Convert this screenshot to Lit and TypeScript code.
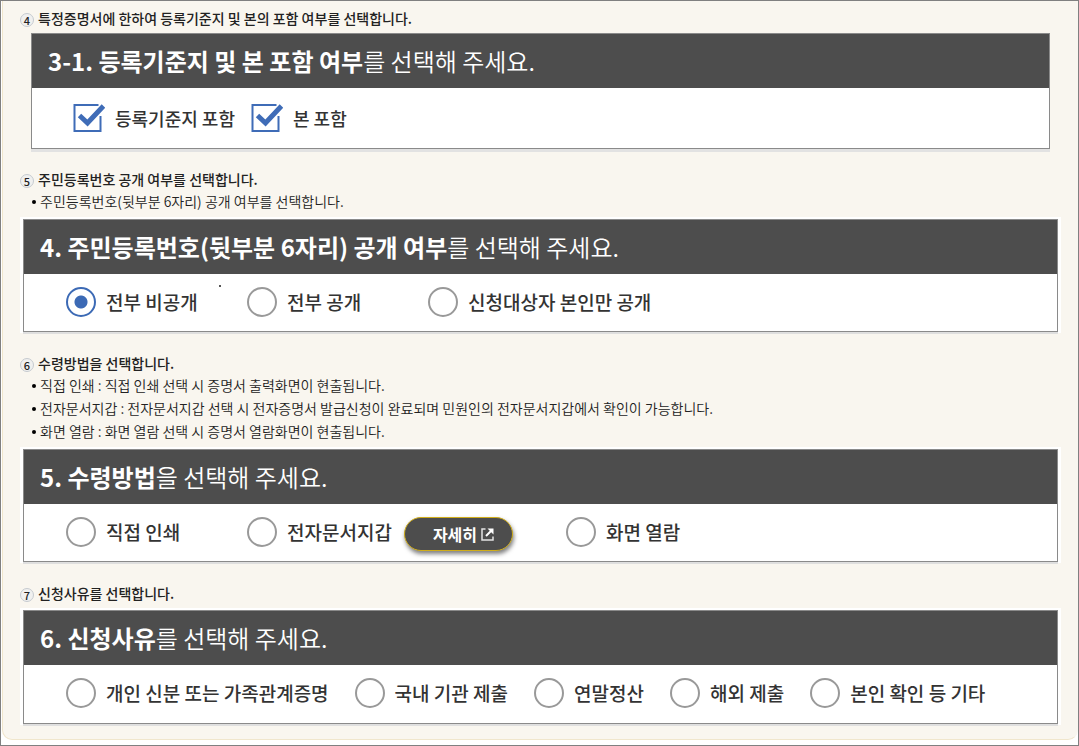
import { LitElement, html, css, svg, nothing } from "lit";
import { customElement, property } from "lit/decorators.js";

interface Choice {
  label: string;
  checked?: boolean;
  mark?: boolean;
  detail?: string;
}

interface Step {
  no: number;
  heading: string;
  notes: string[];
  title: string;
  rest: string;
  kind: "checkbox" | "radio";
  layout: string;
  choices: Choice[];
}

const STEPS: Step[] = [
  {
    no: 4,
    heading: "특정증명서에 한하여 등록기준지 및 본의 포함 여부를 선택합니다.",
    notes: [],
    title: "3-1. 등록기준지 및 본 포함 여부",
    rest: "를 선택해 주세요.",
    kind: "checkbox",
    layout: "inset",
    choices: [
      { label: "등록기준지 포함", checked: true },
      { label: "본 포함", checked: true },
    ],
  },
  {
    no: 5,
    heading: "주민등록번호 공개 여부를 선택합니다.",
    notes: ["주민등록번호(뒷부분 6자리) 공개 여부를 선택합니다."],
    title: "4. 주민등록번호(뒷부분 6자리) 공개 여부",
    rest: "를 선택해 주세요.",
    kind: "radio",
    layout: "framed",
    choices: [
      { label: "전부 비공개", checked: true, mark: true },
      { label: "전부 공개" },
      { label: "신청대상자 본인만 공개" },
    ],
  },
  {
    no: 6,
    heading: "수령방법을 선택합니다.",
    notes: [
      "직접 인쇄 : 직접 인쇄 선택 시 증명서 출력화면이 현출됩니다.",
      "전자문서지갑 : 전자문서지갑 선택 시 전자증명서 발급신청이 완료되며 민원인의 전자문서지갑에서 확인이 가능합니다.",
      "화면 열람 : 화면 열람 선택 시 증명서 열람화면이 현출됩니다.",
    ],
    title: "5. 수령방법",
    rest: "을 선택해 주세요.",
    kind: "radio",
    layout: "framed",
    choices: [
      { label: "직접 인쇄" },
      { label: "전자문서지갑", detail: "자세히" },
      { label: "화면 열람" },
    ],
  },
  {
    no: 7,
    heading: "신청사유를 선택합니다.",
    notes: [],
    title: "6. 신청사유",
    rest: "를 선택해 주세요.",
    kind: "radio",
    layout: "framed tall",
    choices: [
      { label: "개인 신분 또는 가족관계증명" },
      { label: "국내 기관 제출" },
      { label: "연말정산" },
      { label: "해외 제출" },
      { label: "본인 확인 등 기타" },
    ],
  },
];

@customElement("guide-step")
export class GuideStep extends LitElement {
  @property({ attribute: false }) step!: Step;

  static styles = css`
    :host {
      display: block;
    }
    .heading {
      display: flex;
      align-items: center;
      gap: 4px;
      margin: 0;
      font-size: 14px;
      line-height: 22px;
      font-weight: 500;
      color: #222;
    }
    .no {
      box-sizing: border-box;
      width: 14px;
      height: 14px;
      margin-top: 3px;
      border: 1px solid #c6cbd0;
      border-radius: 50%;
      background: #f0f0ef;
      font-size: 11px;
      line-height: 12px;
      text-align: center;
    }
    .notes {
      list-style: none;
      margin: 0;
      padding: 0 0 0 12px;
      font-size: 14px;
      line-height: 23px;
      font-weight: 350;
      color: #222;
    }
    .note {
      display: flex;
      align-items: center;
      gap: 4px;
    }
    .note::before {
      content: "";
      flex: none;
      width: 4px;
      height: 4px;
      border-radius: 50%;
      background: #000;
    }
    .frame {
      margin-top: 4px;
    }
    .frame.framed {
      padding: 2px 3px 1px;
      background: #fff;
    }
    .frame.inset {
      margin-left: 11px;
      margin-right: 11px;
    }
    .card {
      margin: 0;
      padding: 0;
      min-width: 0;
      border: 1px solid #8a8a8a;
      box-shadow: 0 2px 0 #dfdfdf;
      background: #fff;
    }
    .inset .card {
      box-shadow: 0 3px 0 #e2e2e2;
    }
    .title {
      margin: 0;
      padding: 0 16px;
      background: #4d4d4d;
      color: #fff;
      font-size: 24px;
      line-height: 54px;
      font-weight: 350;
    }
    .title strong {
      font-weight: 700;
    }
    .choices {
      display: flex;
      flex-wrap: wrap;
      gap: 8px 26px;
      padding: 13px 42px 14px;
    }
    .tall .choices {
      padding-bottom: 15px;
    }
    .inset .choices {
      gap: 8px 16px;
      padding: 15px 41px;
    }
    .choice {
      position: relative;
      display: flex;
      align-items: center;
      gap: 12px;
    }
    .framed .choice {
      min-width: 155px;
    }
    .tall .choice {
      min-width: 0;
    }
    .choice.wide {
      margin-right: 27px;
    }
    label {
      display: flex;
      align-items: center;
      gap: 10px;
      font-size: 19px;
      line-height: 30px;
      font-weight: 500;
      color: #333;
    }
    .inset label {
      font-size: 18px;
    }
    .control {
      display: grid;
      flex: none;
    }
    .control > * {
      grid-area: 1 / 1;
    }
    input {
      appearance: none;
      box-sizing: border-box;
      margin: 0;
      background: #fff;
    }
    input[type="radio"] {
      width: 30px;
      height: 30px;
      border: 2px solid #999;
      border-radius: 50%;
    }
    input[type="radio"]:checked {
      border-color: #3c6ab5;
      background: radial-gradient(circle, #3c6ab5 6px, #fff 7px);
    }
    input[type="checkbox"] {
      width: 32px;
      height: 30px;
    }
    .tick {
      pointer-events: none;
      visibility: hidden;
    }
    input:checked + .tick {
      visibility: visible;
    }
    .speck {
      position: absolute;
      right: 0;
      top: -2px;
      width: 2px;
      height: 2px;
      background: #555;
    }
    button {
      display: flex;
      align-items: center;
      gap: 4px;
      margin: -1px 0 -5px;
      padding: 0 18px 0 28px;
      height: 34px;
      border: 1px solid #d0ad1a;
      border-radius: 17px;
      background: #4d4d4d;
      box-shadow: 1px 3px 4px rgba(0, 0, 0, 0.5);
      color: #fff;
      font: inherit;
      font-size: 16px;
      font-weight: 700;
      white-space: nowrap;
    }
  `;

  private tick() {
    return svg`<svg class="tick" width="32" height="30" viewBox="0 0 32 30" fill="none">
      <path d="M25.500 2H1.500v26h26V13" stroke="#3f6cb7" stroke-width="2"/>
      <path d="M6.500 12.500l8 7.500L30.500 3" stroke="#3f6cb7" stroke-width="5"/>
    </svg>`;
  }

  private choice(c: Choice, i: number) {
    const s = this.step;
    const id = `choice-${i}`;
    return html`<div class="choice ${c.detail ? "wide" : ""}">
      <label for=${id}>
        <span class="control">
          <input id=${id} type=${s.kind} name="step" .checked=${!!c.checked} />
          ${s.kind === "checkbox" ? this.tick() : nothing}
        </span>
        ${c.label}
      </label>
      ${c.mark ? html`<span class="speck"></span>` : nothing}
      ${c.detail
        ? html`<button type="button">
            ${c.detail}
            <svg width="13" height="13" viewBox="0 0 13 13" fill="none">
              <path d="M4.500 1H1v11h11V8.500" stroke="#e4e4e4" stroke-width="1.500" />
              <path d="M5 8l5-5" stroke="#fff" stroke-width="2" />
              <path d="M6.500 0.500H12.500V6.500Z" fill="#fff" />
            </svg>
          </button>`
        : nothing}
    </div>`;
  }

  render() {
    const s = this.step;
    return html`
      <h2 class="heading"><span class="no">${s.no}</span>${s.heading}</h2>
      ${s.notes.length
        ? html`<ul class="notes">
            ${s.notes.map((n) => html`<li class="note">${n}</li>`)}
          </ul>`
        : nothing}
      <div class="frame ${s.layout}">
        <section class="card">
          <h3 class="title"><strong>${s.title}</strong>${s.rest}</h3>
          <div class="choices">${s.choices.map((c, i) => this.choice(c, i))}</div>
        </section>
      </div>
    `;
  }
}

@customElement("app-root")
export class AppRoot extends LitElement {
  static styles = css`
    :host {
      display: block;
      box-sizing: border-box;
      min-height: 100vh;
      padding: 0 0 3px 1px;
      border: 1px solid #808080;
      background: #fff;
      font-family: "Noto Sans CJK KR", sans-serif;
    }
    .panel {
      display: flex;
      flex-direction: column;
      gap: 19px;
      padding: 6px 16px 14px 17px;
      border: 1px solid #f0e6cc;
      border-top: 0;
      border-right-color: #f9f6ef;
      border-radius: 0 0 10px 10px;
      background: #f9f6ef;
    }
  `;

  render() {
    return html`<main class="panel">
      ${STEPS.map((s) => html`<guide-step .step=${s}></guide-step>`)}
    </main>`;
  }
}
